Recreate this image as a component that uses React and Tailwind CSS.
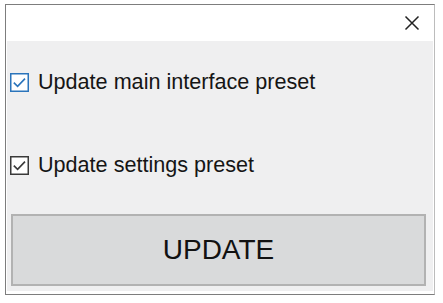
const Box = ({ color }) => (
  <svg width="19" height="19" viewBox="0 0 19 19" className="shrink-0">
    <rect x="0.75" y="0.75" width="17.5" height="17.5" fill="#ffffff" stroke={color} strokeWidth="1.5" />
    <polyline points="3.8,9.6 7.6,13.4 15,5.6" fill="none" stroke={color} strokeWidth="1.6" />
  </svg>
);

export default function App() {
  return (
    <div className="w-[443px] h-[303px] bg-white pt-[4px] pl-[5px]" style={{ fontFamily: '"Liberation Sans", Arial, sans-serif' }}>
      <div className="w-[430px] h-[291px] border border-[#7d7d7d] border-r-[#bcbcbc] bg-white flex flex-col">
        {/* title bar */}
        <div className="h-[36px] flex items-center justify-end pr-[14px] shrink-0">
          <svg width="16" height="16" viewBox="0 0 16 16">
            <path d="M1.5 1.5 L14.5 14.5 M14.5 1.5 L1.5 14.5" stroke="#222" strokeWidth="1.5" fill="none" />
          </svg>
        </div>

        <div className="flex-1 mx-[1px] mb-[3px] bg-[#efeff0] flex flex-col pt-[29px] pl-[3px]">
          <label className="h-[25px] flex items-center gap-[9px] text-[21.6px] text-[#151515]">
            <Box color="#2b74bb" />
            <span>Update main interface preset</span>
          </label>
          <label className="h-[25px] mt-[58px] flex items-center gap-[9px] text-[21.6px] text-[#151515]">
            <Box color="#3a3a3a" />
            <span>Update settings preset</span>
          </label>
          <button className="mt-[36px] ml-[1px] w-[415px] h-[72px] bg-[#d9dadb] border-2 border-[#b2b2b2] text-[28px] text-[#111] flex items-center justify-center">
            UPDATE
          </button>
        </div>
      </div>
    </div>
  );
}
